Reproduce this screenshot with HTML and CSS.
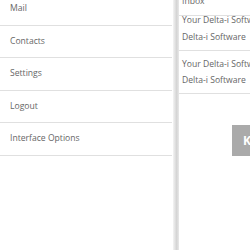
FILE: index.html
```html
<!DOCTYPE html>
<html lang="en">

<head>
    <meta charset="UTF-8">
    <title>Mail</title>
    <link rel="stylesheet" href="styles.css">
</head>

<body>
    <div class="layout">
        <!-- Side menu -->
        <nav class="menu">
            <div class="menu-item">Mail</div>
            <div class="menu-item">Contacts</div>
            <div class="menu-item">Settings</div>
            <div class="menu-item">Logout</div>
            <div class="menu-item">Interface Options</div>
        </nav>

        <div class="divider"></div>

        <!-- Mail panel -->
        <div class="panel">
            <div class="panel-header">Inbox</div>
            <div class="message first">
                <div class="message-subject">Your Delta-i Software account</div>
                <div class="message-from">Delta-i Software</div>
            </div>
            <div class="message">
                <div class="message-subject">Your Delta-i Software account</div>
                <div class="message-from">Delta-i Software</div>
            </div>
            <div class="panel-actions">
                <button class="keep-btn">Keep</button>
            </div>
        </div>
    </div>
</body>

</html>
```

FILE: styles.css
```css
body {
    margin: 0;
    padding: 0;
    font-family: 'Open Sans', sans-serif;
    font-size: 8.6px;
    color: #666;
    background-color: #fff;
    overflow: hidden;
}

.layout {
    display: flex;
    width: 250px;
    height: 250px;
    overflow: hidden;
}

/* Side menu */
.menu {
    width: 172px;
    flex-shrink: 0;
    margin-top: -7px;
}

.menu-item {
    height: 31.5px;
    line-height: 31.5px;
    padding-left: 10px;
    border-bottom: 1px solid #e0e0e0;
}

.divider {
    width: 6px;
    flex-shrink: 0;
    margin-left: 1px;
    background: linear-gradient(to right, #f4f4f4, #d4d4d4 60%, #e8e8e8);
}

/* Mail panel */
.panel {
    flex: 1;
    min-width: 0;
    white-space: nowrap;
    overflow: hidden;
    margin-top: -7px;
}

.panel-header {
    height: 22px;
    line-height: 16px;
    padding-left: 3px;
    border-bottom: 1px solid #e0e0e0;
}

.message {
    padding: 5px 0 5px 3px;
    line-height: 16px;
    border-bottom: 1px solid #e0e0e0;
}

.message.first {
    padding-top: 0;
}

.message.first .message-subject {
    margin-top: -4px;
}

.message.first .message-from {
    margin-top: 1px;
}

.panel-actions {
    padding: 31px 0 0 53px;
}

.keep-btn {
    width: 60px;
    height: 31px;
    padding: 0 0 0 11px;
    border: none;
    background-color: #aaa;
    color: #fff;
    font-family: 'Open Sans', sans-serif;
    font-size: 12px;
    font-weight: bold;
    text-align: left;
}
```
